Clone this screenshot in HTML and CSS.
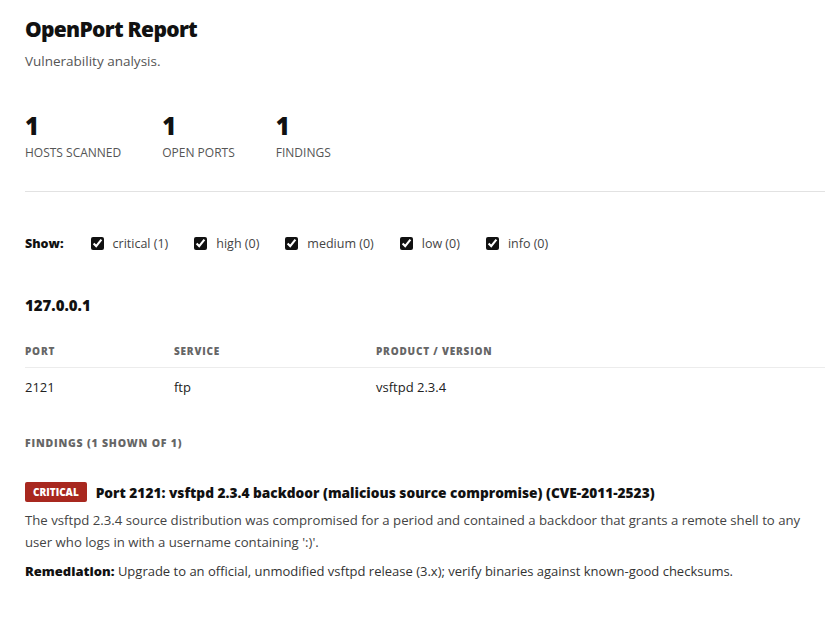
FILE: index.html
```html
<!DOCTYPE html>
<html lang="en">
<head>
<meta charset="utf-8">
<title>OpenPort Report</title>
<link rel="stylesheet" href="styles.css">
</head>
<body>
<main class="report">
  <header class="report-head">
    <h1 class="title">OpenPort Report</h1>
    <p class="subtitle">Vulnerability analysis.</p>
  </header>

  <section class="stats">
    <div class="stat"><div class="stat-num">1</div><div class="stat-label">Hosts scanned</div></div>
    <div class="stat"><div class="stat-num">1</div><div class="stat-label">Open ports</div></div>
    <div class="stat"><div class="stat-num">1</div><div class="stat-label">Findings</div></div>
  </section>

  <form class="filters">
    <span class="filters-label">Show:</span>
    <label class="filter"><input type="checkbox" checked> critical (1)</label>
    <label class="filter"><input type="checkbox" checked> high (0)</label>
    <label class="filter"><input type="checkbox" checked> medium (0)</label>
    <label class="filter"><input type="checkbox" checked> low (0)</label>
    <label class="filter"><input type="checkbox" checked> info (0)</label>
  </form>

  <section class="host">
    <h2 class="host-name">127.0.0.1</h2>
    <table class="ports">
      <thead>
        <tr><th class="col-port">Port</th><th class="col-service">Service</th><th>Product / Version</th></tr>
      </thead>
      <tbody>
        <tr><td>2121</td><td>ftp</td><td>vsftpd 2.3.4</td></tr>
      </tbody>
    </table>

    <h3 class="section-label">Findings (1 shown of 1)</h3>

    <article class="finding">
      <div class="finding-head">
        <span class="badge badge-critical">Critical</span>
        <span class="finding-title">Port 2121: vsftpd 2.3.4 backdoor (malicious source compromise) (CVE-2011-2523)</span>
      </div>
      <p class="finding-desc">The vsftpd 2.3.4 source distribution was compromised for a period and contained a backdoor that grants a remote shell to any user who logs in with a username containing ':)'.</p>
      <p class="finding-fix"><strong>Remediation:</strong> Upgrade to an official, unmodified vsftpd release (3.x); verify binaries against known-good checksums.</p>
    </article>
  </section>
</main>
</body>
</html>
```

FILE: styles.css
```css
* { box-sizing: border-box; }

body {
  margin: 0;
  background: #fff;
  color: #111;
  font-family: "Open Sans", "Noto Sans", sans-serif;
  font-size: 13px;
}

.report {
  padding: 13px 0 0 25px;
}

.title {
  margin: 0;
  font-size: 21px;
  font-weight: 800;
  line-height: 32px;
  letter-spacing: -0.7px;
}

.subtitle {
  margin: 7px 0 0;
  font-size: 13.5px;
  line-height: 18px;
  color: #555;
}

/* headline counters */
.stats {
  display: flex;
  gap: 41px;
  margin-top: 41px;
  padding-bottom: 30px;
  border-bottom: 1px solid #e2e2e2;
}

.stat-num {
  font-size: 24px;
  font-weight: 800;
  line-height: 30px;
}

.stat-label {
  margin-top: 4px;
  font-size: 12px;
  line-height: 16px;
  color: #555;
  text-transform: uppercase;
}

/* severity filters */
.filters {
  display: flex;
  align-items: center;
  gap: 26px;
  margin-top: 43px;
  font-size: 12.5px;
  color: #444;
}

.filters-label {
  font-weight: 800;
  color: #111;
  margin-right: 1px;
}

.filter {
  display: flex;
  align-items: center;
  gap: 9px;
}

.filter input {
  margin: 0;
  width: 13px;
  height: 13px;
  accent-color: #111;
}

/* host block */
.host-name {
  margin: 43px 0 0;
  font-size: 15px;
  font-weight: 800;
  line-height: 20px;
}

.ports {
  width: 100%;
  margin-top: 29px;
  border-collapse: collapse;
}

.ports th {
  text-align: left;
  font-size: 10px;
  font-weight: 800;
  letter-spacing: 0.8px;
  text-transform: uppercase;
  color: #666;
  padding: 0 0 9px;
  border-bottom: 1px solid #ececec;
}

.ports .col-port { width: 149px; }
.ports .col-service { width: 202px; }

.ports td {
  padding: 10px 0;
  font-size: 13px;
  color: #222;
}

.section-label {
  margin: 30px 0 0;
  font-size: 10.5px;
  font-weight: 800;
  letter-spacing: 0.8px;
  text-transform: uppercase;
  color: #666;
}

/* findings */
.finding {
  margin-top: 32px;
}

.finding-head {
  display: flex;
  align-items: center;
  gap: 9px;
}

.badge {
  display: inline-block;
  padding: 3px 8px;
  border-radius: 2px;
  font-size: 10px;
  font-weight: 800;
  line-height: 14px;
  text-transform: uppercase;
  color: #fff;
}

.badge-critical { background: #a8281f; }

.finding-title {
  font-size: 13.7px;
  font-weight: 800;
}

.finding-desc {
  margin: 7px 0 0;
  font-size: 13.2px;
  line-height: 22px;
  color: #444;
}

.finding-fix {
  margin: 9px 0 0;
  color: #333;
}

.finding-fix strong { font-weight: 800; color: #111; }
```
